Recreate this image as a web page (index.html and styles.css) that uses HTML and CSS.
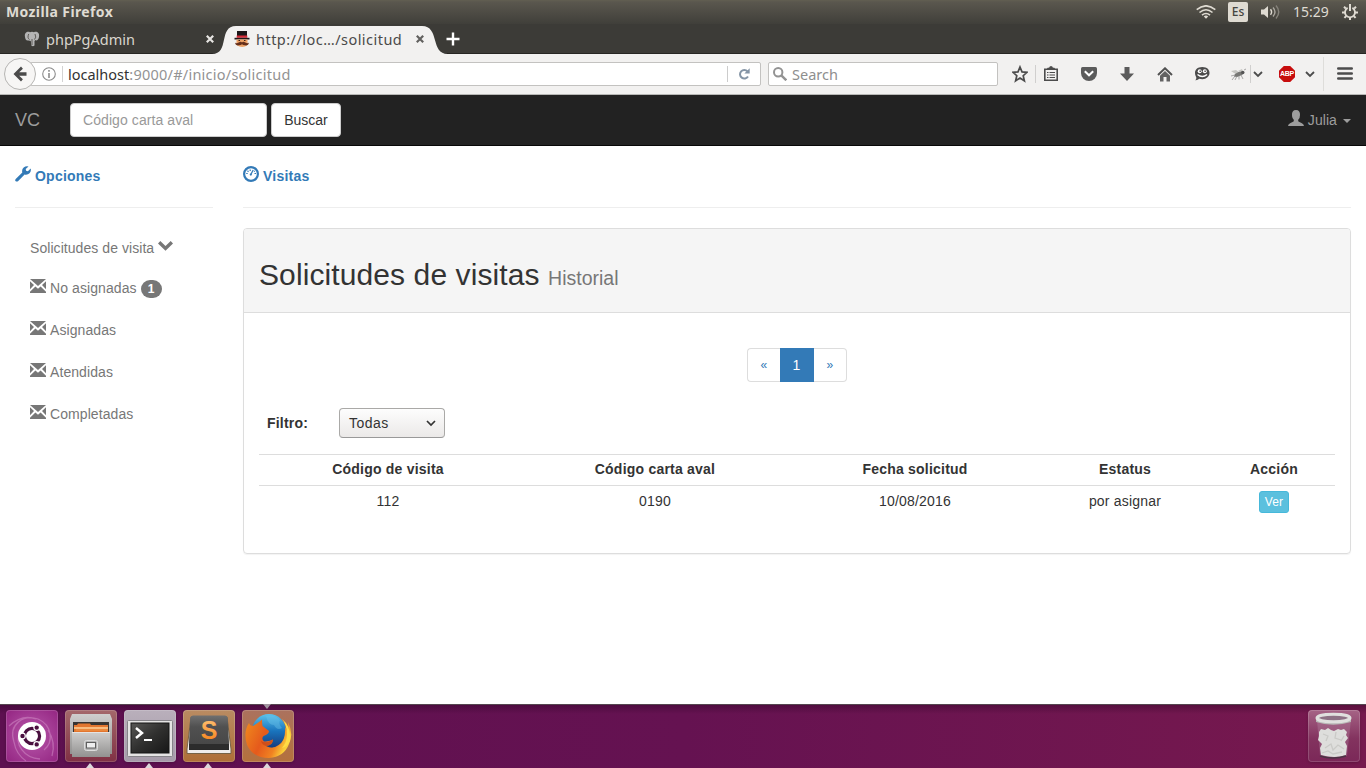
FILE: index.html
```html
<!DOCTYPE html>
<html lang="es">
<head>
<meta charset="utf-8">
<title>Solicitudes de visitas</title>
<link rel="stylesheet" href="styles.css">
</head>
<body>
<svg width="0" height="0" class="defs">
  <defs>
    <symbol id="mail" viewBox="0 0 16 14"><path d="M0 0h16L8 7zM0 2.200L4 6 0 10.200zM16 2.200L12 6 16 10.200zM0 14v-1.300l5.400-5.300L8 9.800 10.600 7.400l5.400 5.300V14z"/></symbol>
    <linearGradient id="metal" x1="0" y1="0" x2="0" y2="1"><stop offset="0" stop-color="#cfcecd"/><stop offset="1" stop-color="#929190"/></linearGradient>
    <linearGradient id="dark" x1="0" y1="0" x2="1" y2="1"><stop offset="0" stop-color="#565654"/><stop offset=".5" stop-color="#30302f"/><stop offset="1" stop-color="#171717"/></linearGradient>
    <linearGradient id="key" x1="0" y1="0" x2="0" y2="1"><stop offset="0" stop-color="#707070"/><stop offset=".4" stop-color="#505050"/><stop offset="1" stop-color="#484848"/></linearGradient>
    <linearGradient id="orange" x1="0" y1="0" x2="0" y2="1"><stop offset="0" stop-color="#ffc87c"/><stop offset="1" stop-color="#f47c12"/></linearGradient>
    <linearGradient id="globe" x1="0" y1="0" x2="0" y2="1"><stop offset="0" stop-color="#5cc3ec"/><stop offset=".5" stop-color="#1974bd"/><stop offset="1" stop-color="#173b7d"/></linearGradient>
    <linearGradient id="fox" x1="0" y1="0" x2="1" y2=".4"><stop offset="0" stop-color="#f08b1d"/><stop offset=".5" stop-color="#e55a1c"/><stop offset=".8" stop-color="#f08222"/><stop offset="1" stop-color="#fbd03a"/></linearGradient>
  </defs>
</svg>

<header class="menubar">
  <span class="app-name">Mozilla Firefox</span>
  <div class="indicators">
    <svg class="wifi" width="20" height="14" viewBox="0 0 20 14" fill="none" stroke="#dfdbd2" stroke-width="1.6"><path d="M.7 4.6Q10-3 19.3 4.6M3.5 7.5Q10 2 16.500 7.500M6 10.200Q10 6.800 14 10.200"/><path d="M7.800 11.500Q10 9.600 12.200 11.500L10 13.800z" fill="#dfdbd2" stroke="none"/></svg>
    <span class="lang">Es</span>
    <svg class="sound" width="20" height="16" viewBox="0 0 20 16" fill="none" stroke-width="1.400"><path d="M0 5.500h3L7 2v12L3 10.500H0z" fill="#dfdbd2"/><path d="M9.500 5.200q2.200 2.800 0 5.600" stroke="#dfdbd2"/><path d="M12 3.500q4 4.500 0 9" stroke="#aaa69e"/><path d="M15 1.500q5.500 6.500 0 13" stroke="#85827a"/></svg>
    <span class="clock">15:29</span>
    <svg class="gear" width="16" height="16" viewBox="0 0 16 16" fill="none" stroke="#dfdbd2"><path d="M5.600 3.900a5 5 0 1 0 4.800 0" stroke-width="1.800"/><path d="M8 0v7" stroke-width="2"/><path d="M3.800 4.500L2 2.700M12.200 4.500L14 2.700M3 8.500H0M13 8.500h3M4.300 12l-1.900 1.900M11.700 12l1.900 1.900M8 13.400V16" stroke-width="2"/></svg>
  </div>
</header>

<div class="tabs">
  <svg class="tab-shape" width="236" height="28" viewBox="0 0 236 28"><path d="M0 28C18 28 6 0 24 0H210C228 0 218 28 236 28z" fill="#f2f1f0"/></svg>
  <div class="tab tab-idle">
    <svg width="16" height="16" viewBox="0 0 16 16"><path d="M1 6C0 1 4 0 6 1.200 7 .5 9 .5 10 1.200 12 0 16 1 15 6 14.500 9 12.500 10 11.500 9L10.500 10V14.500Q9 16 7.300 14.500L6.800 10 4.500 9.500C2 10 1.300 8 1 6z" fill="#b4b4b4"/><path d="M4.700 3Q3 7 5.500 8.500M11 3q1.800 3.500-.5 5.500M8 8v6" fill="none" stroke="#46443f" stroke-width=".8"/></svg>
    <span class="tab-title">phpPgAdmin</span>
    <svg class="tab-x" width="8" height="8" viewBox="0 0 8 8" stroke="#e7e5e2" stroke-width="2.200"><path d="M.8.8l6.400 6.400M7.200.8L.8 7.200"/></svg>
  </div>
  <div class="tab tab-active">
    <svg width="16" height="16" viewBox="0 0 16 16"><path d="M3 0h10v6H3z" fill="#1c1618"/><path d="M2.700 4.500h10.600v2.300H2.700z" fill="#d92a38"/><path d="M.5 6.800h15v1.700H.5z" fill="#201719"/><path d="M2.500 8.500h11V14q-5 4-11 0z" fill="#eda266"/><path d="M4.500 9.500h1.500M10 9.500h1.500" stroke="#3a2018"/><path d="M1 11.800q2 1.200 4-.5 2-1 3 .2 1-1.200 3-.2 2 1.700 4 .5-.5 3.200-4 2.500-2 0-3-1-1 1-3 1-3.500.7-4-2.500z" fill="#66301c"/></svg>
    <span class="tab-title title-active">http://loc…/solicitud</span>
    <svg class="tab-x" width="8" height="8" viewBox="0 0 8 8" stroke="#62615f" stroke-width="2.200"><path d="M.8.8l6.400 6.400M7.200.8L.8 7.200"/></svg>
  </div>
  <svg class="tab-new" width="14" height="14" viewBox="0 0 14 14" stroke="#fff" stroke-width="2.400"><path d="M7 .5v13M.5 7h13"/></svg>
</div>

<div class="toolbar">
  <div class="back"><svg width="14" height="16" viewBox="0 0 14 16"><path d="M8 .5L.5 8 8 15.500l1.900-2.200L6.200 9.700H13.500V6.300H6.200L9.900 2.700z" fill="#4b4b4b"/></svg></div>
  <div class="urlbar">
    <svg width="14" height="14" viewBox="0 0 14 14"><circle cx="7" cy="7" r="6.300" fill="none" stroke="#8b8b8b" stroke-width="1.100"/><path d="M6.200 3h1.600v1.700H6.200zM6.200 6h1.600v5H6.200z" fill="#8b8b8b"/></svg>
    <span class="url"><b>localhost</b>:9000/#/inicio/solicitud</span>
    <span class="reload"><svg width="12" height="12" viewBox="0 0 12 12"><path d="M9.500 3.300A4.300 4.300 0 1 0 10 8.400" fill="none" stroke="#8494a5" stroke-width="2"/><path d="M11.700.3V5.500H6.400z" fill="#8494a5"/></svg></span>
  </div>
  <div class="searchbar">
    <svg width="14" height="14" viewBox="0 0 14 14" fill="none" stroke="#939393"><circle cx="5.200" cy="5.200" r="4.200" stroke-width="2"/><path d="M8.300 8.300l5 5" stroke-width="2.400"/></svg>
    <span>Search</span>
  </div>
  <div class="tools">
    <svg class="star" height="18" viewBox="-8 -9 16 18" width="16"><path d="M0-7L2-2.100 7-1.700 3.200 1.700 4.400 6.800 0 4 -4.400 6.800-3.200 1.700-7-1.700-2-2.100z" fill="none" stroke="#4c4c4c" stroke-width="1.700"/></svg>
    <i class="sep"></i>
    <svg class="list" width="16" height="16" viewBox="0 0 16 16"><path d="M1.800 3.300h12.400v11H1.800z" fill="none" stroke="#4c4c4c" stroke-width="1.600"/><path d="M4.500 3V2H6l1-1.500h2L10 2h1.500v1z" fill="#4c4c4c" stroke="#4c4c4c" stroke-width=".5"/><path d="M4 6.500h1.500M6.500 6.500H12M4 9h1.500M6.500 9H12M4 11.500h1.500M6.500 11.500H12" stroke="#4c4c4c" stroke-width="1.200"/></svg>
    <svg class="pocket" width="16" height="14" viewBox="0 0 16 14"><path d="M1.500 0h13Q16 0 16 1.500V6a8 8 0 0 1-16 0V1.500Q0 0 1.500 0z" fill="#5b5b5b"/><path d="M3.800 4.300L8 8.300l4.200-4" fill="none" stroke="#fff" stroke-width="2"/></svg>
    <svg class="down" width="14" height="14" viewBox="0 0 14 14"><path d="M4.500 0h5v6.500H14L7 14 0 6.500h4.500z" fill="#5b5b5b"/></svg>
    <svg class="home" width="16" height="15" viewBox="0 0 16 15"><path d="M1 8L8 1.300l7 6.700" fill="none" stroke="#515151" stroke-width="2"/><path d="M3 8.800L8 4l5 4.800V14.500H9.500V10h-3v4.500H3z" fill="#626262"/></svg>
    <svg class="chat" width="16" height="14" viewBox="0 0 16 14"><path d="M8.300 0c5 0 7.200 2.800 7.200 6s-3 6.200-7.200 6.200q-1.700 0-3-.4-1.800 1.700-4 1.400 1.300-1.300 1-2.800Q1 8.500 1 6c0-3.200 2.300-6 7.300-6z" fill="#4c4c4c"/><circle cx="5.700" cy="4.200" r="2" fill="#fff"/><circle cx="10.800" cy="4.200" r="2" fill="#fff"/><path d="M5.500 4.200h1.400M10.400 4.200h1.400" stroke="#444" stroke-width="1.400"/><path d="M3.500 7.500q4.800 4 9.600 0" fill="none" stroke="#fff" stroke-width="1.300"/></svg>
    <svg class="fly" width="16" height="13" viewBox="0 0 16 13"><path d="M1 3l5-1 4 3-2 2-4-2zM8 3l4-2 1 3z" fill="#c5c5c1"/><path d="M5 6l4-2.200 3.500-.3L14 5l-2 2-5 2-3-.5z" fill="#777774"/><circle cx="12.800" cy="4.500" r="1.700" fill="#555"/><path d="M2 12l3-4M5 12l2-4M9 11.500V8M13 11l-2-4M1 8l4-1M14 2l2-1" stroke="#888" stroke-width=".7"/></svg>
    <i class="sep"></i>
    <svg class="chev1" width="10" height="7" viewBox="0 0 10 7"><path d="M1 1l4 4 4-4" fill="none" stroke="#4c4c4c" stroke-width="1.800"/></svg>
    <span class="abp"><span>ABP</span></span>
    <svg class="chev2" width="10" height="7" viewBox="0 0 10 7"><path d="M1 1l4 4 4-4" fill="none" stroke="#4c4c4c" stroke-width="1.800"/></svg>
    <i class="sep tall"></i>
    <svg class="menu" width="16" height="14" viewBox="0 0 16 14"><path d="M1.200 1.500h13.600M1.200 6.500h13.600M1.200 11.500h13.600" stroke="#4c4c4c" stroke-width="2.400" stroke-linecap="round"/></svg>
  </div>
</div>

<nav class="navbar">
  <span class="brand">VC</span>
  <input class="code-input" type="text" placeholder="Código carta aval">
  <button class="btn-search">Buscar</button>
  <span class="user"><svg width="16" height="16" viewBox="0 0 16 16"><path d="M8 0C5 0 3.800 2 4 5 4 7 4.600 8.500 5.800 9.800V11.200Q5 12 2.500 12.900 .2 13.700 0 16h16Q15.800 13.700 13.500 12.900 11 12 10.200 11.200V9.800Q12 8.500 12 5C12.200 2 11 0 8 0z" fill="#9d9d9d"/></svg><span>Julia</span><i class="caret"></i></span>
</nav>

<div class="page">
  <aside class="side">
    <h4 class="col-title"><svg width="16" height="16" viewBox="0 0 16 16"><path d="M.7 13L7.300 6.600Q6.500 3.500 8.700 1.500 10.800-.3 13.500.4L10.700 3l.4 1.800 1.800.400 2.800-2.700q.7 2.700-1.200 4.800-2 2-4.900 1.300L3 15.200Q1.800 16 .7 15.200T.7 13z" fill="#337ab7"/></svg><span>Opciones</span></h4>
    <ul class="menu-list">
      <li class="first">Solicitudes de visita <svg width="15" height="10" viewBox="0 0 15 10"><path d="M2.300 0L7.500 5 12.700 0 15 2.400 7.500 9.700 0 2.400z" fill="#777"/></svg></li>
      <li><svg class="mail"><use href="#mail"/></svg>No asignadas<span class="badge">1</span></li>
      <li><svg class="mail"><use href="#mail"/></svg>Asignadas</li>
      <li><svg class="mail"><use href="#mail"/></svg>Atendidas</li>
      <li><svg class="mail"><use href="#mail"/></svg>Completadas</li>
    </ul>
  </aside>
  <main class="main">
    <h4 class="col-title"><svg width="16" height="16" viewBox="0 0 16 16" fill="none" stroke="#337ab7"><circle cx="8" cy="8" r="6.900" stroke-width="2.200"/><path d="M7.800 8.500L10.200 4" stroke-width="1.300"/><path d="M3.200 7.500h1.500M4.500 4.800l1 .9M7.200 3.600v1.300M11.500 7.500H13M11.800 5l-.7.600" stroke-width="1.200"/><circle cx="7.800" cy="8.600" r="1.100" fill="#337ab7" stroke="none"/></svg><span>Visitas</span></h4>
    <section class="panel">
      <h1 class="panel-head">Solicitudes de visitas <small>Historial</small></h1>
      <div class="panel-body">
        <div class="pager"><a>«</a><a class="on">1</a><a>»</a></div>
        <div class="filter"><label>Filtro:</label><div class="select"><span>Todas</span><svg width="10" height="7" viewBox="0 0 10 7"><path d="M1 1l4 4 4-4" fill="none" stroke="#333" stroke-width="1.700"/></svg></div></div>
        <table class="grid">
          <colgroup><col class="c1"><col class="c2"><col class="c3"><col class="c4"><col class="c5"></colgroup>
          <tr><th>Código de visita</th><th>Código carta aval</th><th>Fecha solicitud</th><th>Estatus</th><th>Acción</th></tr>
          <tr><td>112</td><td>0190</td><td>10/08/2016</td><td>por asignar</td><td><a class="btn-view">Ver</a></td></tr>
        </table>
      </div>
    </section>
  </main>
</div>

<footer class="dock">
  <div class="tile t-ubuntu"><svg width="52" height="52" viewBox="0 0 52 52"><path d="M8 32C2 14 18 4 32 9 46 15 48 32 38 40M3 16Q16 4 30 9M14 22C8 34 18 48 34 49M8 32Q10 44 20 51M42 20Q50 32 46 46" fill="none" stroke="#e0a8d8" stroke-width="1.300" opacity=".4"/><circle cx="26" cy="26" r="14" fill="#fff"/><circle cx="26" cy="26" r="7.600" fill="none" stroke="#4a103f" stroke-width="3.200"/><g fill="#4a103f" stroke="#fff" stroke-width="1.200"><circle cx="16.500" cy="26" r="2.800"/><circle cx="30.700" cy="17.600" r="2.800"/><circle cx="30.700" cy="34.400" r="2.800"/></g></svg></div>
  <div class="tile t-files run"><svg width="52" height="52" viewBox="0 0 52 52"><path d="M7 4h38l2 5v35H5V9z" fill="url(#metal)"/><path d="M8 12h36v11H8z" fill="#373432"/><path d="M9 15h3l1-1.500h12L26 15h17v7H9z" fill="#e2762f"/><path d="M9 18h34" stroke="#ffd49c" stroke-width="1.500"/><path d="M11 20h32" stroke="#f39a4c"/><path d="M7 22h38v25H7z" fill="url(#metal)"/><path d="M7 22.500h38" stroke="#e4e3e2"/><rect x="19.500" y="30.500" width="13" height="10" rx="2" fill="#b5b5b5" stroke="#ddd"/><rect x="21.500" y="32.500" width="9" height="5.500" fill="#eee" stroke="#5f5f5f"/></svg></div>
  <div class="tile t-term run"><svg width="52" height="52" viewBox="0 0 52 52"><rect x="3.500" y="10.500" width="45" height="36" rx="1" fill="#e5e4e4" stroke="#868489"/><rect x="7" y="13" width="38" height="30" fill="url(#dark)" stroke="#151515"/><path d="M12 18l6 5-6 5" fill="none" stroke="#fff" stroke-width="2.500"/><path d="M20 30h8" stroke="#fff" stroke-width="2"/></svg></div>
  <div class="tile t-sub run"><svg width="52" height="52" viewBox="0 0 52 52"><path d="M8 7h36l4 32v4.500H4V39z" fill="#efedeb" stroke="#776346"/><path d="M6 37L9 8h34l3 29v3H6z" fill="#292929"/><path d="M10 5.500h32q2.500 0 2.800 2.500L46 34H6L7.200 8q.3-2.500 2.800-2.500z" fill="url(#key)"/><path d="M6 34h40v5.500H6z" fill="#2c2c2c"/><text x="26" y="29" text-anchor="middle" class="sub-letter" fill="url(#orange)">S</text></svg></div>
  <div class="tile t-fox run top-mark"><svg width="52" height="52" viewBox="0 0 52 52"><circle cx="27" cy="21" r="17" fill="url(#globe)"/><path d="M24 6q9-2 14 4-2 4 2 8-5 3-8-3-6 0-8-9z" fill="#6fc6ea" opacity=".4"/><path d="M7 13Q8 16 11 16 14 14 17 12L20 9.500Q20 13 20.500 16L27 21Q27 24 21.500 26 19 29 22 31.500 26 32 31 29.500 31 35 24 36 31 40 37 35 44 30 43 17 47 23 47 28L46 12Q52 24 47 34 42 47 27 48 11 48 5 35 1 22 7 13z" fill="url(#fox)"/><path d="M40 9Q45 15 45 25 45 32 40 38 45 37 48 31 49 20 44 13z" fill="#ffdc46"/><path d="M19 31q5 3 12-1.500-.500 6-7 6.500-4-1-5-5z" fill="#c2451a" opacity=".7"/></svg></div>
  <div class="tile t-trash"><svg width="52" height="52" viewBox="0 0 52 52"><path d="M9 10l3 36q14 4 27 0l4-36z" fill="#c8a9bd" opacity=".25"/><path d="M11 22l2-3 4 1 3-2 3 2 3 1 4-2 3 1 3-1 3 3-1 3 2 3-3 4 2 4-1 9q-11 4-25 0l-1-7 2-4-4-4 1-4z" fill="#dededc"/><path d="M15 24l5 2-2 5M28 22l-1 6 6 2M36 26l-3 5M17 38l6-4 2 6 5-5 6 4M14 43l6-2 5 3 9-2" fill="none" stroke="#cacac7" stroke-width="1.300"/><path d="M12 46q13 4 26 0" fill="none" stroke="#4b3344" stroke-width="1.500"/><path d="M8 9v3q17 5.500 35 0V9z" fill="#b8b8b6"/><ellipse cx="25.500" cy="8" rx="16.500" ry="3.800" fill="#8e7285" stroke="#e0e0de" stroke-width="3"/></svg></div>
</footer>
</body>
</html>
```
FILE: styles.css
```css
* { box-sizing: border-box; }
body { margin: 0; width: 1366px; height: 768px; overflow: hidden; display: flex; flex-direction: column; background: #fff; font: 14px/20px "Liberation Sans", Arial, sans-serif; color: #333; letter-spacing: .08px; }
.defs { position: absolute; }
svg { display: block; flex: none; }

.menubar, .tabs, .toolbar { font-family: "Noto Sans", "Open Sans", sans-serif; flex: none; letter-spacing: 0; }
.menubar { height: 24px; display: flex; align-items: center; justify-content: space-between; padding: 0 8px 0 6px; background: linear-gradient(#625f51, #5a574e 2px, #403f3a); color: #dfdbd2; }
.app-name { font-size: 14px; font-weight: 700; letter-spacing: .38px; }
.indicators { display: flex; align-items: center; }
.lang { width: 20px; height: 20px; margin-left: 12px; border-radius: 2px; background: #dfdbd2; color: #45443f; font-size: 12px; font-weight: 500; line-height: 20px; text-align: center; }
.sound { margin-left: 13px; }
.clock { margin-left: 12px; width: 38px; font-size: 14px; }
.gear { margin-left: 11px; }

.tabs { position: relative; height: 30px; background: #3c3b37; border-bottom: 1px solid #272623; display: flex; align-items: center; color: #dad6ce; }
.tab-shape { position: absolute; left: 212px; top: 2px; }
.tab { display: flex; align-items: center; position: relative; height: 28px; }
.tab-idle { width: 214px; margin-left: 24px; }
.tab-active { width: 190px; margin-left: -4px; color: #4b4a49; }
.tab-title { margin-left: 6px; font-size: 14.5px; width: 160px; white-space: nowrap; }
.title-active { letter-spacing: .47px; }
.tab-new { margin-left: 22px; }

.toolbar { height: 41px; background: #f2f1f0; border-bottom: 1px solid #b8b8b6; display: flex; align-items: center; }
.back { width: 32px; height: 32px; margin-left: 4px; border: 1px solid #b6b5b3; border-radius: 50%; background: #f7f6f5; display: flex; align-items: center; justify-content: center; z-index: 1; }
.urlbar { width: 731px; height: 24px; margin-left: -6px; padding-left: 11px; border: 1px solid #c3c2c0; border-radius: 2px; background: #fff; display: flex; align-items: center; }
.url { margin-left: 6px; padding-left: 5px; border-left: 1px solid #d3d3d3; height: 16px; line-height: 16px; color: #939393; font-size: 14.5px; letter-spacing: .24px; }
.url b { font-weight: 400; color: #333; letter-spacing: 0; }
.reload { width: 33px; height: 16px; margin-left: auto; border-left: 1px solid #ccc; display: flex; align-items: center; justify-content: center; }
.searchbar { width: 230px; height: 24px; margin-left: 7px; padding-left: 4px; border: 1px solid #c3c2c0; border-radius: 2px; background: #fff; display: flex; align-items: center; gap: 5px; color: #8e8e8e; font-size: 14.5px; }
.tools { display: flex; align-items: center; height: 40px; }
.sep { width: 1px; height: 18px; background: #d0cfce; }
.tall { height: 34px; margin-left: 8px; background: #deddda; }
.star { margin-left: 14px; margin-right: 7px; }
.list { margin-left: 7px; }
.pocket { margin-left: 22px; }
.down { margin-left: 23px; }
.home { margin-left: 23px; }
.chat { margin-left: 21px; margin-right: 1px; }
.fly { margin-left: 19px; margin-right: 4px; }
.chev1 { margin-left: 2px; }
.abp { width: 16px; height: 16px; margin-left: 16px; display: flex; align-items: center; justify-content: center; background: #c70d0d; clip-path: polygon(30% 0, 70% 0, 100% 30%, 100% 70%, 70% 100%, 30% 100%, 0 70%, 0 30%); color: #fff; font: 700 7px/16px "Liberation Sans", sans-serif; letter-spacing: -.3px; }
.chev2 { margin-left: 10px; }
.menu { margin-left: 13px; }

.navbar { flex: none; height: 51px; background: #222; border-bottom: 1px solid #080808; display: flex; align-items: center; padding: 0 15px; color: #9d9d9d; }
.brand { width: 55px; font-size: 18px; }
.code-input { width: 197px; height: 34px; padding: 6px 12px; border: 1px solid #ccc; border-radius: 4px; background: #fff; font: inherit; letter-spacing: .08px; }
.code-input::placeholder { color: #999; opacity: 1; }
.btn-search { width: 70px; height: 34px; margin-left: 4px; padding: 0; border: 1px solid #ccc; border-radius: 4px; background: #fff; color: #333; font: inherit; }
.user { margin-left: auto; display: flex; align-items: center; gap: 4px; }
.user svg { margin-top: -4px; }
.caret { border: 4px solid transparent; border-top-color: #9d9d9d; border-bottom: 0; margin-left: 2px; margin-top: 2px; }

.page { flex: 1; min-height: 0; display: flex; gap: 30px; padding: 0 15px; }
.side { width: 198px; }
.main { flex: 1; }
.col-title { height: 62px; margin: 0; padding-top: 20px; border-bottom: 1px solid #eee; display: flex; gap: 4px; color: #337ab7; font-size: 14px; line-height: 20px; letter-spacing: .22px; }
.menu-list { list-style: none; margin: 0; padding: 18px 0 0 15px; color: #777; }
.menu-list li { height: 42px; display: flex; align-items: center; gap: 4px; }
.menu-list .first { height: 40px; margin-top: 2px; letter-spacing: .06px; }
.menu-list .first svg { margin-top: -5px; }
.menu-list li:nth-child(2) { height: 41px; padding-bottom: 2px; }
.mail { width: 16px; height: 14px; margin-top: -4px; fill: #777; }
.badge { width: 21px; height: 18px; border-radius: 10px; background: #777; color: #fff; font-size: 12px; font-weight: 700; line-height: 18px; text-align: center; margin-top: 2px; }

.panel { height: 326px; margin-top: 20px; border: 1px solid #ddd; border-radius: 4px; box-shadow: 0 1px 1px rgba(0,0,0,.05); overflow: hidden; }
.panel-head { height: 84px; margin: 0; padding: 29px 15px 0; background: #f5f5f5; border-bottom: 1px solid #ddd; font-size: 30px; font-weight: 400; line-height: 33px; letter-spacing: .1px; }
.panel-head small { font-size: 19.5px; color: #777; letter-spacing: 0; }
.panel-body { padding: 35px 15px 0; }
.pager { display: flex; justify-content: center; line-height: 32px; text-align: center; color: #337ab7; }
.pager a { width: 34px; height: 34px; border: 1px solid #ddd; border-left-width: 0; border-radius: 0 4px 4px 0; font-size: 12px; }
.pager a:first-child { width: 33px; border-left-width: 1px; border-right: 0; border-radius: 4px 0 0 4px; }
.pager a.on { background: #337ab7; border-color: #337ab7; color: #fff; border-radius: 0; font-size: 14px; }
.pager a:last-child { width: 33px; }
.filter { display: flex; align-items: center; height: 30px; margin-top: 26px; padding-left: 8px; }
.filter label { width: 72px; font-weight: 700; letter-spacing: .2px; }
.select { width: 106px; height: 30px; padding: 0 8px 0 9px; display: flex; align-items: center; justify-content: space-between; border: 1px solid #aaa9a7; border-bottom-color: #999; border-radius: 4px; background: linear-gradient(#fdfdfd, #ebe9e8); letter-spacing: .5px; }
.grid { width: 1076px; margin-top: 16px; border-collapse: collapse; table-layout: fixed; text-align: center; }
.c1 { width: 258px; } .c2 { width: 276px; } .c3 { width: 244px; } .c4 { width: 176px; } .c5 { width: 122px; }
.grid th, .grid td { padding: 5px; border-top: 1px solid #ddd; letter-spacing: .2px; }
.grid th { padding: 4px 5px 6px; letter-spacing: .22px; }
.grid td { padding-top: 4px; vertical-align: top; line-height: 22px; }
.btn-view { display: inline-block; height: 22px; padding: 1px 5px; border: 1px solid #46b8da; border-radius: 3px; background: #5bc0de; color: #fff; font-size: 12px; line-height: 18px; vertical-align: top; margin-top: 1px; letter-spacing: .1px; }

.dock { flex: none; height: 64px; border-top: 1px solid #554650; display: flex; gap: 7px; padding: 5px 6px; background: linear-gradient(rgba(35,0,30,.35), transparent 9px), linear-gradient(90deg, #5d1050, #651251 50%, #77194e); }
.tile { position: relative; width: 52px; height: 52px; border-radius: 4px; box-shadow: inset 0 0 0 1px rgba(255,255,255,.16), 0 1px 3px rgba(0,0,0,.2); }
.t-ubuntu { background: radial-gradient(circle, #b95aac, #932481); }
.t-files { background: linear-gradient(#a4686b, #803044); }
.t-term { background: linear-gradient(#b9afbb, #a59ba9); }
.t-sub { background: linear-gradient(#b98b62, #ae6e37); }
.t-fox { background: linear-gradient(#ab725e, #b4713d); }
.t-trash { margin-left: auto; background: linear-gradient(#a66486, #83335f 55%, #7b2858); }
.sub-letter { font: 700 25px "Liberation Sans", sans-serif; letter-spacing: 0; }
.run::after { content: ""; position: absolute; left: 21px; top: 53px; border: 4px solid transparent; border-top: 0; border-bottom: 5px solid #dcd8da; }
.top-mark::before { content: ""; position: absolute; left: 21px; top: -6px; border: 4px solid transparent; border-bottom: 0; border-top: 5px solid #a295a0; }
```
